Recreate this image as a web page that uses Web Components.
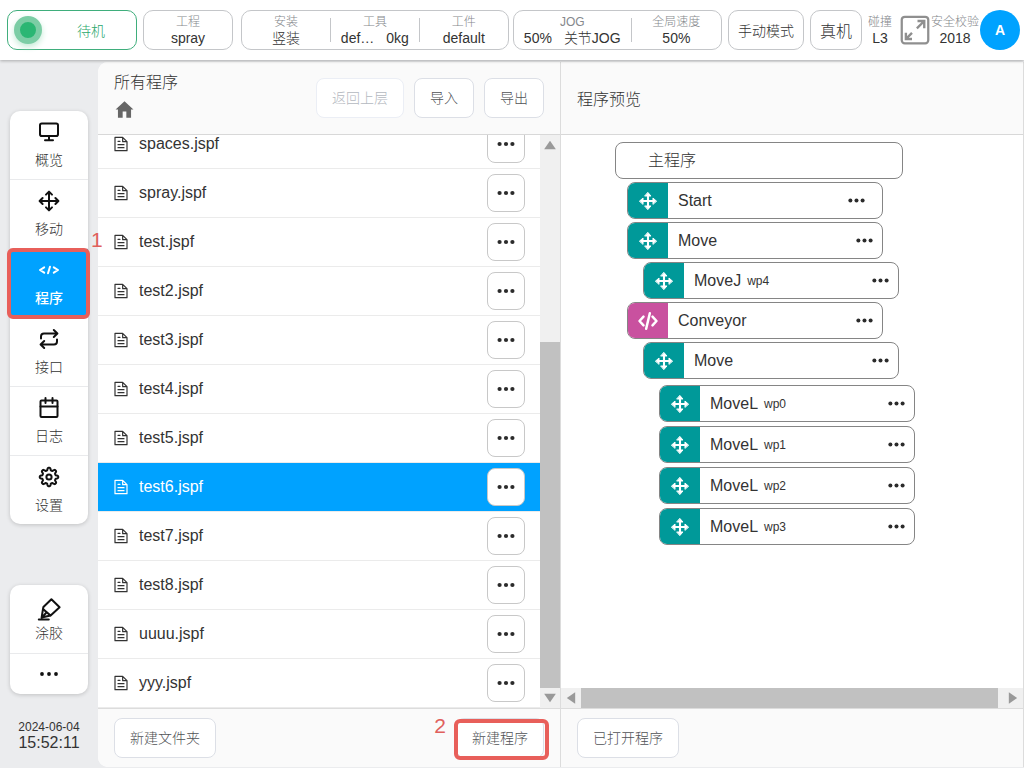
<!DOCTYPE html>
<html lang="zh-CN">
<head>
<meta charset="utf-8">
<title>程序</title>
<style>
  html, body { margin: 0; height: 100%; }
  body {
    font-family: "Liberation Sans", "Noto Sans CJK SC", sans-serif;
    font-size: 16px;
    font-weight: 300;
    color: #333;
    background: #ebecee;
  }
</style>
</head>
<body>
<robot-app></robot-app>

<script>
/* outline of an eight-toothed gear with rounded teeth */
const gearOutline = () => {
  const points = [];
  for (let i = 0; i < 96; i++) {
    const a = i / 96 * Math.PI * 2;
    const r = 8 + 1.3 * Math.tanh(2 * Math.cos(8 * a));
    points.push((12 + r * Math.cos(a)).toFixed(2) + ' ' + (12 + r * Math.sin(a)).toFixed(2));
  }
  return 'M' + points.join('L') + 'Z';
};

const ICONS = {
  monitor: '<rect x="3" y="3.5" width="18" height="12.5" rx="1.8"/><path d="M12 16v4M8 20.3h8"/>',
  move: '<path d="M12 3v18M3 12h18M9 5.6l3-3 3 3M9 18.4l3 3 3-3M5.6 9l-3 3 3 3M18.4 9l3 3-3 3"/>',
  code: '<path d="M7.2 9.4L3 12l4.2 2.6M16.8 9.4L21 12l-4.2 2.6M13 8.8l-2 6.4"/>',
  repeat: '<path d="M4 11.5V9.5a3 3 0 0 1 3-3h12.6M16.8 3L20.4 6.5l-3.6 3.5M20 12.5v2a3 3 0 0 1-3 3H4.4M7.2 21L3.6 17.5 7.2 14"/>',
  calendar: '<rect x="3.5" y="4.5" width="17" height="16.5" rx="1"/><path d="M3.5 10.5h17M8.5 2v5M15.5 2v5"/>',
  gear: `<circle cx="12" cy="12" r="2.6"/><path d="${gearOutline()}"/>`,
  marker: '<path d="M14.4 2.2l8.2 8-9 8.4-7.6-6.6.4-2zM6 12L4.6 20.6l9-2M6 12l7.4 6.6M5 20.4l4-4.4M1.8 22.6h10"/>',
  dots: '<g fill="currentColor" stroke="none"><circle cx="5" cy="12" r="2.3"/><circle cx="12" cy="12" r="2.3"/><circle cx="19" cy="12" r="2.3"/></g>',
  dotsSmall: '<g fill="currentColor" stroke="none"><circle cx="5" cy="12" r="1.9"/><circle cx="12" cy="12" r="1.9"/><circle cx="19" cy="12" r="1.9"/></g>',
  file: '<path d="M3 2h11.5L21 8.500V22H3zM14.500 2v6.500H21M7.500 8h3M7.500 13h9M7.500 17.500h9"/>',
  home: '<path fill="currentColor" stroke="none" d="M12 2.6L1.8 12h2.7v9.4h5.4v-7h4.2v7h5.4V12h2.7z"/>',
  expand: '<rect x="1.4" y="1.4" width="21.2" height="21.2" rx="2.4"/><g stroke-linecap="butt" stroke-linejoin="miter" stroke-width="1.9"><path d="M14 4.8h5.4v5.800M19 5.200l-5.500 5.500"/><path d="M9.600 19.200H4.700v-5M5 18.900l4.600-4.600"/></g>',
  up: '<path fill="currentColor" stroke="none" d="M12 7l7 10H5z"/>',
  moveBold: '<path stroke-width="2.8" d="M12 4v16M4 12h16"/><path fill="currentColor" stroke-width="1.2" d="M12 .8l4 4.600H8zM12 23.200l4-4.600H8zM.8 12l4.600-4v8zM23.200 12l-4.600-4v8z"/>',
  codeBold: '<path stroke-width="3" d="M6.6 6.8L1.800 12l4.800 5.200M17.4 6.800l4.800 5.200-4.800 5.200M14.200 2.800L9.800 21.200"/>'
};

const define = (name, css, html, setup) => {
  const template = document.createElement('template');
  template.innerHTML = `<style>*{box-sizing:border-box}:host{box-sizing:border-box}${css}</style>${html}`;
  customElements.define(name, class extends HTMLElement {
    constructor() {
      super();
      this.attachShadow({ mode: 'open' }).append(template.content.cloneNode(true));
    }
    connectedCallback() { if (setup) setup(this, this.shadowRoot); }
  });
};

/* line icon; size and stroke weight come from custom properties */
define('ui-icon', `
  :host { display: inline-flex; flex: none; }
  svg { width: var(--size, 24px); height: var(--size, 24px); display: block; fill: none; overflow: visible;
        stroke: currentColor; stroke-width: var(--weight, 2); stroke-linecap: round; stroke-linejoin: round; }
`, '<svg viewBox="0 0 24 24" aria-hidden="true"></svg>', (el, root) => {
  root.querySelector('svg').innerHTML = ICONS[el.getAttribute('name')];
});

/* red tutorial frame with its step number */
define('step-marker', `
  :host { position: absolute; inset: -1px -2px -2px -3px; border: 4px solid #e85f5a; border-radius: 6px; pointer-events: none; }
  span { position: absolute; color: #e0605c; font-size: 21px; line-height: 24px; font-weight: 400; }
  :host([side=right]) span { left: 100%; top: -24px; margin-left: 5px; }
  :host([side=left]) { inset: 1px -5px -2px -2px; }
  :host([side=left]) span { right: 100%; top: -9px; margin-right: 12px; }
`, '<span><slot></slot></span>');

define('ui-button', `
  :host { display: block; position: relative; flex: none; }
  button { height: 40px; padding: 0 15px; border: 1px solid #dcdfe6; border-radius: 8px; background: #fff;
           color: #505256; font: inherit; font-size: 14px; line-height: 20px; white-space: nowrap; display: block; }
  :host([disabled]) button { color: #b4b8c0; border-color: #ebeef5; }
`, '<button type="button"><slot></slot></button><slot name="marker"></slot>', (el, root) => {
  root.querySelector('button').disabled = el.hasAttribute('disabled');
});

/* caption over value, used across the top bar */
define('stat-cell', `
  :host { display: flex; flex-direction: column; align-items: center; justify-content: center; white-space: nowrap; min-width: 0; }
  .caption { font-size: 12px; line-height: 16px; color: #85888c; }
  .value { display: flex; gap: 12px; font-size: 14px; line-height: 16px; }
`, '<div class="caption"></div><div class="value"><slot></slot></div>', (el, root) => {
  root.querySelector('.caption').textContent = el.getAttribute('caption');
});

define('top-bar', `
  :host { display: flex; align-items: center; gap: 6px; height: 60px; flex: none; padding: 0 4px 0 7px;
          background: #fff; box-shadow: 0 1px 3px rgba(0,0,0,.28); position: relative; }
  .box { height: 40px; border: 1px solid #c4c6c9; border-radius: 10px; background: #fff; color: #333; min-width: 0;
         display: flex; align-items: center; justify-content: center; font: inherit; padding: 0; }
  .state { flex: 130 1 130px; border-color: #3fae7c; color: #2aa76b; font-size: 14px; padding-left: 6px; }
  .state span { flex: 1; text-align: center; padding-left: 4px; }
  .lamp { width: 28px; height: 28px; border-radius: 50%; background: #2bb673; border: 6px solid #7ccda5; box-shadow: 0 3px 6px #c4ebd6; }
  .project { flex: 90 1 90px; }
  .stats { flex: 483 1 483px; min-width: 0; display: flex; gap: 4px; padding-left: 2px; }
  .setup { flex: 268 1 0; }
  .jog { flex: 209 1 0; }
  .mode { flex: 76 1 76px; font-size: 14px; }
  .machine { flex: 52 1 52px; font-size: 16px; }
  .box stat-cell { flex: 1 1 0; }
  .jog stat-cell:first-child { flex: 118 1 0; }
  .jog stat-cell:last-child { flex: 90 1 0; }
  i { width: 1px; height: 24px; background: #c4c6c9; }
  .end { display: flex; align-items: center; gap: 1px; flex: none; }
  .expand { width: 37px; border: 0; background: none; padding: 0; color: #8f8f8f; --size: 30px; --weight: 1.8;
            display: flex; justify-content: flex-end; }
  .avatar { width: 40px; height: 40px; border: 0; border-radius: 50%; background: #00a2ff; color: #fff; padding: 0;
            font: bold 14px/20px "Liberation Sans", sans-serif; }
`, `
  <div class="box state"><div class="lamp"></div><span>待机</span></div>
  <div class="box project"><stat-cell caption="工程">spray</stat-cell></div>
  <div class="stats">
    <div class="box setup">
      <stat-cell caption="安装">竖装</stat-cell><i></i>
      <stat-cell caption="工具"><span>def…</span><span>0kg</span></stat-cell><i></i>
      <stat-cell caption="工件">default</stat-cell>
    </div>
    <div class="box jog">
      <stat-cell caption="JOG"><span>50%</span><span>关节JOG</span></stat-cell><i></i>
      <stat-cell caption="全局速度">50%</stat-cell>
    </div>
  </div>
  <button type="button" class="box mode">手动模式</button>
  <button type="button" class="box machine">真机</button>
  <div class="end">
    <stat-cell caption="碰撞">L3</stat-cell>
    <button type="button" class="expand" aria-label="全屏"><ui-icon name="expand"></ui-icon></button>
    <stat-cell caption="安全校验">2018</stat-cell>
    <button type="button" class="avatar">A</button>
  </div>
`);

define('nav-item', `
  :host { display: block; position: relative; }
  :host(:not(:last-child)) { border-bottom: 1px solid #e9eaec; }
  a { display: flex; flex-direction: column; align-items: center; height: 68px; padding-top: 9px; gap: 4px;
      font-size: 14px; line-height: 24px; color: #333; text-decoration: none; }
  ui-icon { color: #111; }
  :host([active]) a { background: #00a2ff; color: #fff; font-weight: 500; }
  :host([active]) ui-icon { color: #fff; }
  :host([tight]) a { padding-top: 12px; gap: 0; }
  :host([more]) a { height: 40px; padding-top: 8px; }
`, '<a href="#"><ui-icon></ui-icon><slot></slot></a><slot name="marker"></slot>', (el, root) => {
  const icon = root.querySelector('ui-icon');
  const fresh = document.createElement('ui-icon');
  fresh.setAttribute('name', el.getAttribute('icon'));
  icon.replaceWith(fresh);
});

define('side-bar', `
  :host { display: flex; flex-direction: column; flex: none; width: 98px; padding: 51px 10px 17px; }
  nav { background: #fff; border-radius: 10px; box-shadow: 0 1px 4px rgba(0,0,0,.18); }
  nav + nav { margin-top: 61px; }
  nav-item { --size: 24px; --weight: 2; }
  time { margin-top: auto; text-align: center; font-size: 12px; line-height: 16px; white-space: nowrap; }
  time b { display: block; font-size: 16px; font-weight: 300; }
`, `
  <nav>
    <nav-item icon="monitor">概览</nav-item>
    <nav-item icon="move">移动</nav-item>
    <nav-item icon="code" active>程序<step-marker slot="marker" side="right">1</step-marker></nav-item>
    <nav-item icon="repeat">接口</nav-item>
    <nav-item icon="calendar">日志</nav-item>
    <nav-item icon="gear">设置</nav-item>
  </nav>
  <nav>
    <nav-item icon="marker" tight>涂胶</nav-item>
    <nav-item icon="dotsSmall" more></nav-item>
  </nav>
  <time datetime="2024-06-04T15:52:11">2024-06-04<b>15:52:11</b></time>
`);

/* panel with header, body and footer bands */
define('ui-panel', `
  :host { display: flex; flex-direction: column; min-width: 0; min-height: 0; border-right: 1px solid #dcdcdc; background: #fff; }
  header, footer { flex: none; display: flex; align-items: center; justify-content: space-between; background: #fafafa; padding: 0 16px; }
  header { height: 73px; border-bottom: 1px solid #d8d8d8; }
  footer { height: 59px; border-top: 1px solid #dcdcdc; }
  .body { flex: 1; min-height: 0; display: flex; }
`, '<header><slot name="header"></slot></header><div class="body"><slot></slot></div><footer><slot name="footer"></slot></footer>');

define('scroll-track', `
  :host { display: flex; flex-direction: column; flex: none; width: 20px; background: #f0f0f0; color: #999; }
  :host([horizontal]) { flex-direction: row; width: auto; height: 20px; }
  ui-icon { --size: 20px; }
  .last { transform: rotate(180deg); }
  :host([horizontal]) .first { transform: rotate(-90deg); }
  :host([horizontal]) .last { transform: rotate(90deg); }
  .before { flex: var(--before, 0) 1 0; }
  .thumb { flex: var(--thumb, 1) 1 0; background: #c1c1c1; }
  .after { flex: var(--after, 0) 1 0; }
`, `<ui-icon class="first" name="up"></ui-icon><div class="before"></div><div class="thumb"></div><div class="after"></div><ui-icon class="last" name="up"></ui-icon>`);

define('file-row', `
  :host { display: flex; align-items: center; height: 49px; padding: 0 15px; border-bottom: 1px solid #ebebeb; }
  :host([selected]) { background: #00a2ff; color: #fff; }
  ui-icon { --size: 16px; --weight: 1.8; }
  span { flex: 1; padding-left: 10px; line-height: 24px; white-space: nowrap; }
  button { width: 38px; height: 38px; padding: 0; border: 1px solid #c8c8c8; border-radius: 8px; background: #fff;
           color: #2b2b2b; display: flex; align-items: center; justify-content: center; }
  button ui-icon { --size: 22px; }
`, '<ui-icon name="file"></ui-icon><span><slot></slot></span><button type="button" aria-label="更多"><ui-icon name="dots"></ui-icon></button>');

define('file-list', `
  :host { display: flex; flex: 1; min-width: 0; }
  ul { flex: 1; min-width: 0; margin: 0; padding: 0; list-style: none; overflow: hidden;
       display: flex; flex-direction: column; justify-content: flex-end; }
  li { flex: none; }
  scroll-track { --before: 187; --thumb: 346; }
`, '<ul></ul><scroll-track></scroll-track>', (el, root) => {
  const names = ['spaces', 'spray', 'test', 'test2', 'test3', 'test4', 'test5', 'test6', 'test7', 'test8', 'uuuu', 'yyy'];
  root.querySelector('ul').innerHTML = names.map(n =>
    `<li><file-row${n === 'test6' ? ' selected' : ''}>${n}.jspf</file-row></li>`).join('');
});

/* one instruction of the program; nested instructions go in the default slot */
define('program-node', `
  :host { display: block; }
  .node { display: flex; align-items: stretch; width: 256px; height: 37px; border: 1px solid #858585;
          border-radius: 8px; overflow: hidden; background: #fff; }
  .badge { width: 40px; display: flex; align-items: center; justify-content: center; background: #009999; color: #fff; --size: 18px; }
  :host([kind=script]) .badge { background: #c9519f; --size: 20px; }
  .label { flex: 1; display: flex; align-items: center; gap: 6px; padding-left: 10px; line-height: 24px; white-space: nowrap; }
  small { font-size: 12px; line-height: 16px; }
  button { border: 0; background: none; padding: 0 7px 0 0; color: #2b2b2b; --size: 21px; display: flex; align-items: center; }
  :host([entry]) button { padding-right: 15px; }
  .children { display: flex; flex-direction: column; gap: var(--gap, 3px); margin: var(--lead, 3px) 0 0 16px; }
  :host([leaf]) .children { display: none; }
`, `
  <div class="node">
    <div class="badge"></div>
    <div class="label"><span class="name"></span><small></small></div>
    <button type="button" aria-label="更多"><ui-icon name="dots"></ui-icon></button>
  </div>
  <div class="children"><slot></slot></div>
`, (el, root) => {
  root.querySelector('.badge').innerHTML =
    `<ui-icon name="${el.getAttribute('kind') === 'script' ? 'codeBold' : 'moveBold'}"></ui-icon>`;
  root.querySelector('.name').textContent = el.getAttribute('name');
  root.querySelector('small').textContent = el.getAttribute('point') || '';
});

define('program-tree', `
  :host { display: flex; flex-direction: column; flex: 1; min-width: 0; }
  .canvas { flex: 1; min-height: 0; overflow: hidden; padding: 7px 0 0 54px; }
  .root { width: 288px; height: 37px; border: 1px solid #858585; border-radius: 8px; padding-left: 32px; line-height: 35px; }
  .steps { display: flex; flex-direction: column; gap: 3px; margin: 3px 0 0 12px; }
  .points { --lead: 6px; --gap: 4px; }
  scroll-track { --thumb: 417; --after: 5; }
`, `
  <div class="canvas">
    <div class="root">主程序</div>
    <div class="steps">
      <program-node name="Start" entry leaf></program-node>
      <program-node name="Move"><program-node name="MoveJ" point="wp4" leaf></program-node></program-node>
      <program-node name="Conveyor" kind="script">
        <program-node name="Move" class="points">
          <program-node name="MoveL" point="wp0" leaf></program-node>
          <program-node name="MoveL" point="wp1" leaf></program-node>
          <program-node name="MoveL" point="wp2" leaf></program-node>
          <program-node name="MoveL" point="wp3" leaf></program-node>
        </program-node>
      </program-node>
    </div>
  </div>
  <scroll-track horizontal></scroll-track>
`);

define('robot-app', `
  :host { display: flex; flex-direction: column; min-height: 100%; height: 100vh; }
  .layout { flex: 1; min-height: 0; display: flex; }
  main { flex: 1; min-width: 0; display: grid; grid-template-columns: 1fr 1fr; grid-template-rows: minmax(0, 1fr);
         margin: 2px 0 1px; border-radius: 10px 0 0 10px; overflow: hidden; }
  h1, h2 { margin: 0; font-size: 16px; font-weight: 300; line-height: 24px; }
  h2 { padding-top: 4px; }
  .path { align-self: flex-start; padding-top: 9px; }
  .path a { display: block; margin-top: 4px; color: #666; --size: 21px; }
  .actions { display: flex; gap: 10px; }
`, `
  <top-bar></top-bar>
  <div class="layout">
    <side-bar></side-bar>
    <main>
      <ui-panel>
        <div slot="header" class="path"><h1>所有程序</h1><a href="#" aria-label="根目录"><ui-icon name="home"></ui-icon></a></div>
        <div slot="header" class="actions">
          <ui-button disabled>返回上层</ui-button><ui-button>导入</ui-button><ui-button>导出</ui-button>
        </div>
        <file-list></file-list>
        <ui-button slot="footer">新建文件夹</ui-button>
        <ui-button slot="footer">新建程序<step-marker slot="marker" side="left">2</step-marker></ui-button>
      </ui-panel>
      <ui-panel>
        <h2 slot="header">程序预览</h2>
        <program-tree></program-tree>
        <ui-button slot="footer">已打开程序</ui-button>
      </ui-panel>
    </main>
  </div>
`);
</script>
</body>
</html>
